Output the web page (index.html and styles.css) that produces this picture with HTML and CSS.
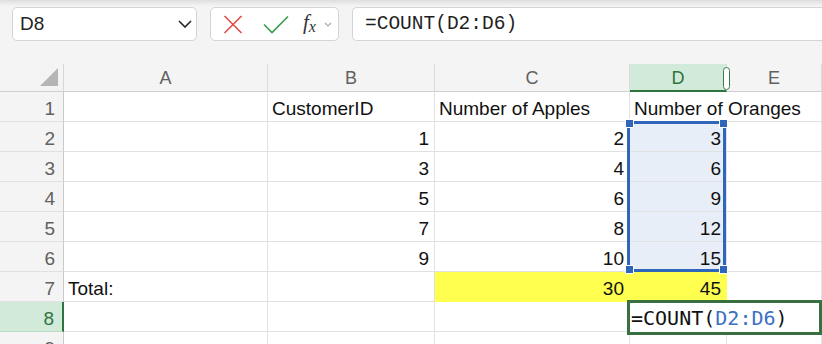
FILE: index.html
```html
<!DOCTYPE html>
<html lang="en">
<head>
  <meta charset="UTF-8">
  <title>Sheet1</title>
  <link rel="stylesheet" href="styles.css">
</head>
<body>

  <div class="toolbar">
    <div class="namebox">
      <span>D8</span>
      <svg width="14" height="8" viewBox="0 0 14 8"><path d="M1 1 L7 7 L13 1" fill="none" stroke="#242424" stroke-width="1.6"/></svg>
    </div>
    <div class="fxbox">
      <svg class="ico" width="20" height="19" viewBox="0 0 20 19"><path d="M1.5 1 L18.5 18 M18.5 1 L1.5 18" stroke="#e0463f" stroke-width="1.5" fill="none"/></svg>
      <svg class="ico" width="26" height="19" viewBox="0 0 26 19"><path d="M1 9.5 L9 17.5 L25 1.5" stroke="#3d9a4b" stroke-width="1.6" fill="none"/></svg>
      <span class="fx">f<sub>x</sub></span>
      <svg width="8" height="5" viewBox="0 0 8 5"><path d="M1 1 L4 4 L7 1" fill="none" stroke="#a8a8a8" stroke-width="1.1"/></svg>
    </div>
    <div class="formula">=COUNT(D2:D6)</div>
  </div>

  <div class="sheet">
    <!-- header -->
    <div class="corner"><span class="tri"></span></div>
    <div class="colhead">A</div>
    <div class="colhead">B</div>
    <div class="colhead">C</div>
    <div class="colhead active">D<span class="grip"></span></div>
    <div class="colhead">E</div>

    <div class="rowhead">1</div>
    <div class="cell"></div>
    <div class="cell">CustomerID</div>
    <div class="cell">Number of Apples</div>
    <div class="cell wide">Number of Oranges</div>

    <div class="rowhead">2</div>
    <div class="cell"></div>
    <div class="cell num">1</div>
    <div class="cell num">2</div>
    <div class="cell num sel">3</div>
    <div class="cell"></div>

    <div class="rowhead">3</div>
    <div class="cell"></div>
    <div class="cell num">3</div>
    <div class="cell num">4</div>
    <div class="cell num sel">6</div>
    <div class="cell"></div>

    <div class="rowhead">4</div>
    <div class="cell"></div>
    <div class="cell num">5</div>
    <div class="cell num">6</div>
    <div class="cell num sel">9</div>
    <div class="cell"></div>

    <div class="rowhead">5</div>
    <div class="cell"></div>
    <div class="cell num">7</div>
    <div class="cell num">8</div>
    <div class="cell num sel">12</div>
    <div class="cell"></div>

    <div class="rowhead">6</div>
    <div class="cell"></div>
    <div class="cell num">9</div>
    <div class="cell num">10</div>
    <div class="cell num sel">15</div>
    <div class="cell"></div>

    <div class="rowhead">7</div>
    <div class="cell">Total:</div>
    <div class="cell"></div>
    <div class="cell num yellow">30</div>
    <div class="cell num yellow">45</div>
    <div class="cell"></div>

    <div class="rowhead active">8</div>
    <div class="cell"></div>
    <div class="cell"></div>
    <div class="cell"></div>
    <div class="cell wide"></div>

    <div class="rowhead">9</div>
    <div class="cell"></div>
    <div class="cell"></div>
    <div class="cell"></div>
    <div class="cell"></div>
    <div class="cell"></div>

    <!-- D2:D6 range outline -->
    <div class="range">
      <span class="handle tl"></span>
      <span class="handle tr"></span>
      <span class="handle bl"></span>
      <span class="handle br"></span>
    </div>

    <!-- D8 in edit mode -->
    <div class="editor">=COUNT(<span class="ref">D2:D6</span>)</div>
  </div>

</body>
</html>
```

FILE: styles.css
```css
* { margin: 0; padding: 0; box-sizing: border-box; }

body {
  background: #f4f4f4;
  font-family: 'Liberation Sans', Arial, sans-serif;
  color: #1f1f1f;
  width: 822px;
  height: 344px;
  overflow: hidden;
}

/* formula bar */
.toolbar {
  height: 64px;
  display: flex;
  align-items: flex-start;
  gap: 13px;
  padding: 7px 0 0 12px;
  background: linear-gradient(#dedede, #f4f4f4 6px);
}

.namebox, .fxbox, .formula {
  height: 34px;
  background: white;
  border: 1px solid #d4d4d4;
  border-radius: 5px;
  display: flex;
  align-items: center;
}

.namebox {
  width: 185px;
  justify-content: space-between;
  padding: 0 4px 0 7px;
  font-size: 19px;
  color: #242424;
}

.fxbox {
  width: 129px;
  padding: 0 0 0 12px;
}

.fxbox .ico { margin-right: 20px; }
.fxbox .ico + .ico { margin-right: 14px; }

.fx {
  font-family: 'Liberation Serif', serif;
  font-style: italic;
  font-size: 21px;
  color: #333;
  margin-right: 8px;
  margin-top: -2px;
}

.fx sub {
  font-size: 16px;
  vertical-align: -3px;
}

.formula {
  flex: 1;
  border-right: none;
  border-radius: 5px 0 0 5px;
  padding-left: 12px;
  font-family: 'Liberation Mono', monospace;
  font-size: 19.5px;
  color: #1f1f1f;
}

/* grid */
.sheet {
  position: relative;
  display: grid;
  grid-template-columns: 64px 204px 167px 195px 97px 1fr;
  grid-template-rows: 28px repeat(9, 30px);
  background: white;
}

.corner, .colhead {
  background: #f4f4f4;
  border-bottom: 1px solid #cfcfcf;
}

.corner {
  display: flex;
  justify-content: flex-end;
  align-items: flex-end;
  padding: 0 5px 5px 0;
  border-right: 1px solid #d6d6d6;
}

.tri {
  width: 0;
  height: 0;
  border-style: solid;
  border-width: 0 0 18px 18px;
  border-color: transparent transparent #b5b5b5 transparent;
}

.colhead {
  position: relative;
  display: flex;
  align-items: flex-end;
  justify-content: center;
  padding-bottom: 2px;
  border-right: 1px solid #dcdcdc;
  font-size: 18px;
  color: #616161;
}

.colhead.active {
  z-index: 1;
  background: #d2ead9;
  color: #2f7341;
  border-bottom: 2px solid #2f7341;
  padding-bottom: 1px;
}

.grip {
  position: absolute;
  right: -4px;
  top: 3px;
  width: 7px;
  height: 23px;
  background: white;
  border: 1.5px solid #3a7d4a;
  border-radius: 4px;
}

.rowhead {
  background: #f4f4f4;
  border-right: 1px solid #c9c9c9;
  border-bottom: 1px solid #e0e0e0;
  display: flex;
  align-items: flex-end;
  justify-content: flex-end;
  padding: 0 8px 1px 0;
  font-size: 19px;
  color: #616161;
}

.rowhead.active {
  background: #d2ead9;
  color: #2f7341;
  border-right: 2px solid #2f7341;
  border-bottom-color: #b7dcc2;
}

.cell {
  border-right: 1px solid #e1e1e1;
  border-bottom: 1px solid #e1e1e1;
  display: flex;
  align-items: flex-end;
  padding: 0 5px 1px 4px;
  font-size: 19px;
  white-space: nowrap;
  color: #111;
}

.cell.wide { grid-column: span 2; }
.cell.num { justify-content: flex-end; }
.cell.sel { background: #e8eef8; }
.cell.yellow { background: #ffff4f; border-right-color: #ffff4f; border-bottom-color: #ffff4f; }

/* selection */
.range {
  position: absolute;
  left: 627px;
  top: 57px;
  width: 99px;
  height: 151px;
  border: 3px solid #2f66b9;
}

.handle {
  position: absolute;
  width: 9px;
  height: 9px;
  background: #2f66b9;
  border: 1px solid white;
}

.handle.tl { left: -5px; top: -5px; }
.handle.tr { right: -5px; top: -5px; }
.handle.bl { left: -5px; bottom: -5px; }
.handle.br { right: -5px; bottom: -5px; }

.editor {
  position: absolute;
  left: 627px;
  top: 236px;
  width: 195px;
  height: 35px;
  background: white;
  border: 3px solid #38703f;
  padding-left: 1px;
  display: flex;
  align-items: center;
  font-family: 'DejaVu Sans Mono', monospace;
  font-size: 20px;
  color: #111;
  white-space: pre;
}

.editor .ref { color: #3b70c4; }
```
